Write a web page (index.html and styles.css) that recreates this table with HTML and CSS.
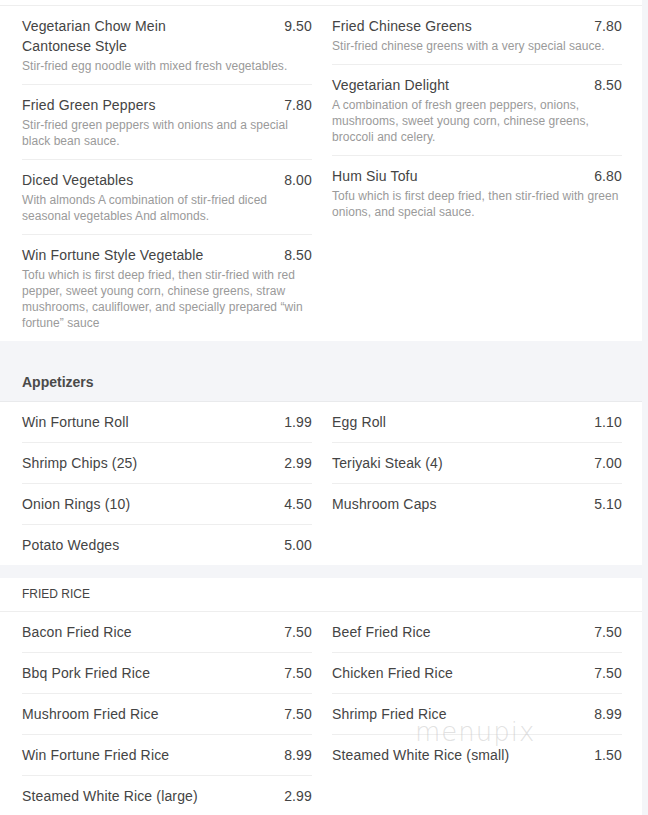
FILE: index.html
```html
<!DOCTYPE html>
<html>
<head>
<meta charset="utf-8">
<link rel="stylesheet" href="styles.css">
</head>
<body>
<div class="page">
  <section class="card">
    <div class="card-top"></div>
    <div class="cols">
      <div class="col">
        <div class="item">
          <div class="item-head"><span class="name">Vegetarian Chow Mein Cantonese Style</span><span class="price">9.50</span></div>
          <div class="desc">Stir-fried egg noodle with mixed fresh vegetables.</div>
        </div>
        <div class="item">
          <div class="item-head"><span class="name">Fried Green Peppers</span><span class="price">7.80</span></div>
          <div class="desc">Stir-fried green peppers with onions and a special black bean sauce.</div>
        </div>
        <div class="item">
          <div class="item-head"><span class="name">Diced Vegetables</span><span class="price">8.00</span></div>
          <div class="desc">With almonds A combination of stir-fried diced seasonal vegetables And almonds.</div>
        </div>
        <div class="item">
          <div class="item-head"><span class="name">Win Fortune Style Vegetable</span><span class="price">8.50</span></div>
          <div class="desc">Tofu which is first deep fried, then stir-fried with red pepper, sweet young corn, chinese greens, straw mushrooms, cauliflower, and specially prepared “win fortune” sauce</div>
        </div>
      </div>
      <div class="col">
        <div class="item">
          <div class="item-head"><span class="name">Fried Chinese Greens</span><span class="price">7.80</span></div>
          <div class="desc">Stir-fried chinese greens with a very special sauce.</div>
        </div>
        <div class="item">
          <div class="item-head"><span class="name">Vegetarian Delight</span><span class="price">8.50</span></div>
          <div class="desc">A combination of fresh green peppers, onions, mushrooms, sweet young corn, chinese greens, broccoli and celery.</div>
        </div>
        <div class="item">
          <div class="item-head"><span class="name">Hum Siu Tofu</span><span class="price">6.80</span></div>
          <div class="desc">Tofu which is first deep fried, then stir-fried with green onions, and special sauce.</div>
        </div>
      </div>
    </div>
  </section>

  <h2 class="cat-header">Appetizers</h2>
  <section class="card">
    <div class="cols">
      <div class="col">
        <div class="item"><div class="item-head"><span class="name">Win Fortune Roll</span><span class="price">1.99</span></div></div>
        <div class="item"><div class="item-head"><span class="name">Shrimp Chips (25)</span><span class="price">2.99</span></div></div>
        <div class="item"><div class="item-head"><span class="name">Onion Rings (10)</span><span class="price">4.50</span></div></div>
        <div class="item"><div class="item-head"><span class="name">Potato Wedges</span><span class="price">5.00</span></div></div>
      </div>
      <div class="col">
        <div class="item"><div class="item-head"><span class="name">Egg Roll</span><span class="price">1.10</span></div></div>
        <div class="item"><div class="item-head"><span class="name">Teriyaki Steak (4)</span><span class="price">7.00</span></div></div>
        <div class="item"><div class="item-head"><span class="name">Mushroom Caps</span><span class="price">5.10</span></div></div>
      </div>
    </div>
  </section>

  <section class="card card-gap">
    <h3 class="sub-header">FRIED RICE</h3>
    <div class="cols">
      <div class="col">
        <div class="item"><div class="item-head"><span class="name">Bacon Fried Rice</span><span class="price">7.50</span></div></div>
        <div class="item"><div class="item-head"><span class="name">Bbq Pork Fried Rice</span><span class="price">7.50</span></div></div>
        <div class="item"><div class="item-head"><span class="name">Mushroom Fried Rice</span><span class="price">7.50</span></div></div>
        <div class="item"><div class="item-head"><span class="name">Win Fortune Fried Rice</span><span class="price">8.99</span></div></div>
        <div class="item"><div class="item-head"><span class="name">Steamed White Rice (large)</span><span class="price">2.99</span></div></div>
      </div>
      <div class="col">
        <div class="item"><div class="item-head"><span class="name">Beef Fried Rice</span><span class="price">7.50</span></div></div>
        <div class="item"><div class="item-head"><span class="name">Chicken Fried Rice</span><span class="price">7.50</span></div></div>
        <div class="item"><div class="item-head"><span class="name">Shrimp Fried Rice</span><span class="price">8.99</span></div></div>
        <div class="item"><div class="item-head"><span class="name">Steamed White Rice (small)</span><span class="price">1.50</span></div></div>
      </div>
    </div>
    <div class="watermark">menupix</div>
  </section>
</div>
</body>
</html>
```

FILE: styles.css
```css
html, body {
  margin: 0;
  padding: 0;
  background: #f4f5f8;
  font-family: "Liberation Sans", Arial, sans-serif;
  color: #444;
}

.page {
  width: 642px;
}

.card {
  background: #fff;
  position: relative;
}

.card-gap {
  margin-top: 13px;
}

.card-top {
  height: 5px;
  border-bottom: 1px solid #eeeeee;
}

.cols {
  display: flex;
  gap: 20px;
  padding: 0 20px 0 22px;
  align-items: flex-start;
}

.col {
  flex: 1 1 0;
  min-width: 0;
}

.item {
  padding: 10px 0;
  border-bottom: 1px solid #eeeeee;
}

.item:last-child {
  border-bottom: none;
}

.item-head {
  display: flex;
  justify-content: space-between;
  gap: 12px;
  font-size: 14px;
  line-height: 20px;
  letter-spacing: 0.15px;
  color: #444;
}

.name {
  max-width: 66%;
}

.price {
  flex: none;
}

.desc {
  margin-top: 2px;
  font-size: 12px;
  line-height: 16px;
  letter-spacing: 0.05px;
  color: #9a9a9a;
}

.cat-header {
  margin: 0;
  padding: 31px 22px 9px;
  font-size: 14px;
  line-height: 20px;
  font-weight: bold;
  color: #4a4a4a;
  border-bottom: 1px solid #e9eaec;
}

.sub-header {
  margin: 0;
  padding: 8px 22px 9px;
  font-size: 12px;
  line-height: 16px;
  font-weight: normal;
  color: #444;
  border-bottom: 1px solid #eeeeee;
}

.watermark {
  position: absolute;
  left: 415px;
  top: 139px;
  font-family: "DejaVu Sans", sans-serif;
  font-size: 26px;
  font-weight: 200;
  letter-spacing: 1px;
  color: rgba(190, 190, 190, 0.45);
  pointer-events: none;
}
```
